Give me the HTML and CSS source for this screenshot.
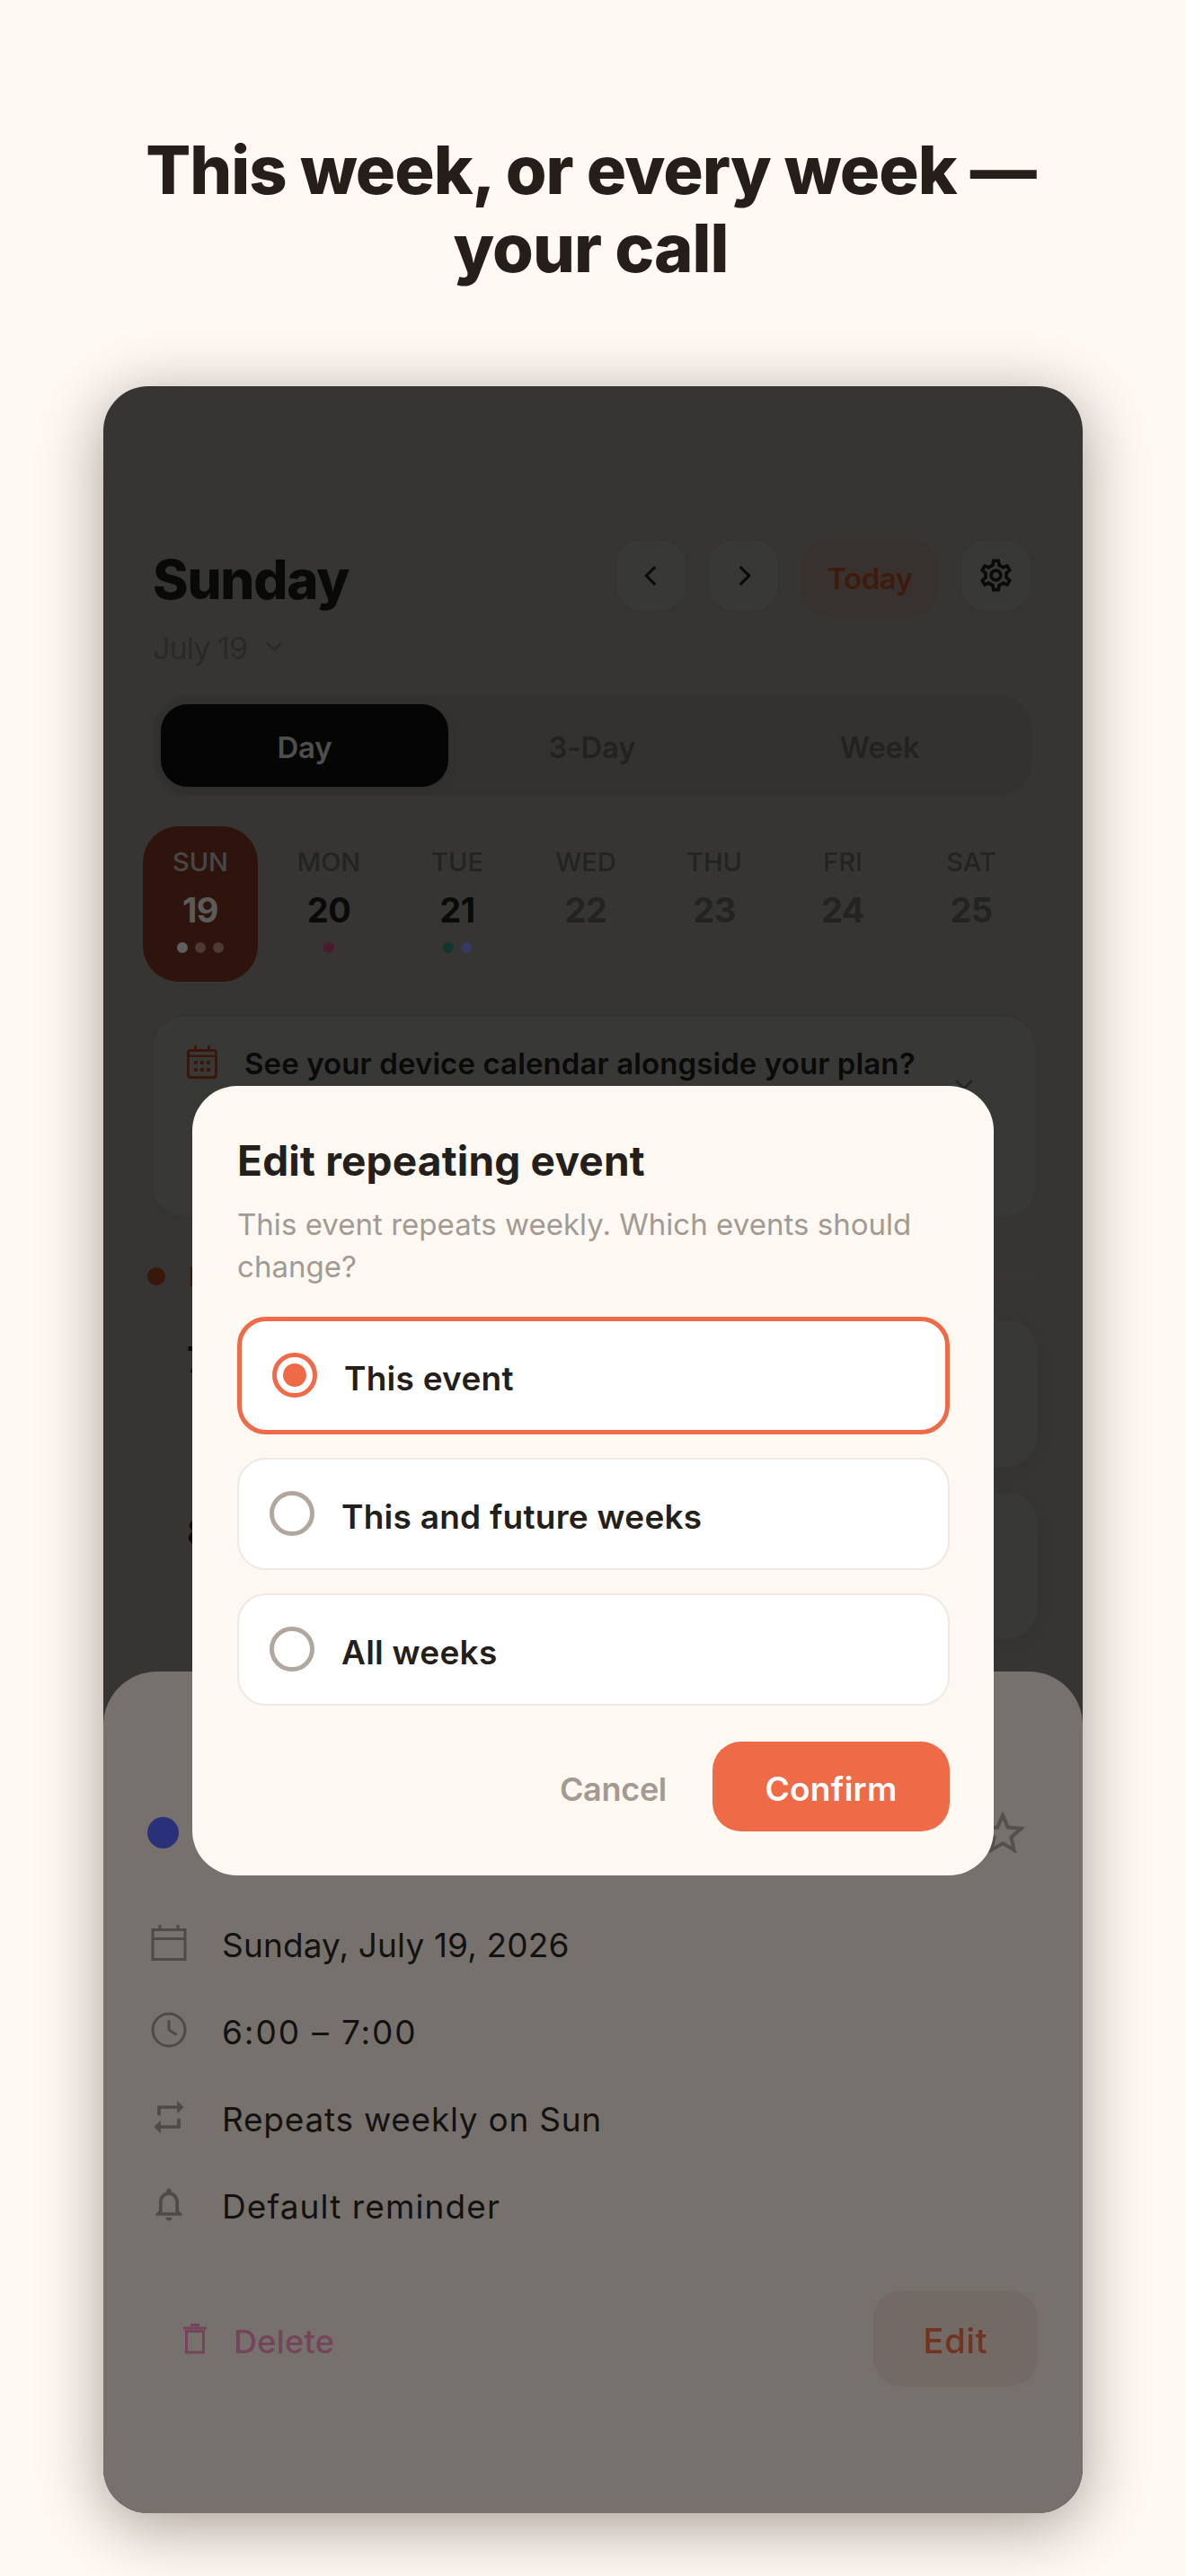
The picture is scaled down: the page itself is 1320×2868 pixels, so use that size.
FILE: index.html
```html
<!DOCTYPE html>
<html lang="en">
<head>
<meta charset="utf-8">
<title>This week, or every week</title>
<link rel="stylesheet" href="styles.css">
</head>
<body>
<h1 class="headline">This week, or every week —<br>your call</h1>
<main class="phone">
  <section class="screen">
    <header class="top">
      <div class="top-left">
        <h2 class="day-title">Sunday</h2>
        <div class="month"><span>July 19</span>
          <svg class="month-chev" viewBox="0 0 18 10"><path d="M1.5 1.5 9 8.5l7.500-7"/></svg>
        </div>
      </div>
      <div class="top-actions">
        <button class="square"><svg viewBox="0 0 24 24"><path d="M15 5l-7 7 7 7"/></svg></button>
        <button class="square"><svg viewBox="0 0 24 24"><path d="M9 5l7 7-7 7"/></svg></button>
        <button class="today">Today</button>
        <button class="square"><svg class="gear" viewBox="0 0 24 24"><path d="M19.43 12.98c.04-.32.07-.64.07-.98 0-.34-.03-.66-.07-.98l2.11-1.65c.19-.15.24-.42.12-.64l-2-3.46c-.09-.16-.26-.25-.44-.25-.06 0-.12.01-.17.03l-2.49 1c-.52-.4-1.08-.73-1.69-.98l-.38-2.65C14.46 2.18 14.25 2 14 2h-4c-.25 0-.46.18-.49.42l-.38 2.65c-.61.25-1.17.59-1.69.98l-2.49-1c-.06-.02-.12-.03-.18-.03-.17 0-.34.09-.43.25l-2 3.46c-.13.22-.07.49.12.64l2.11 1.65c-.04.32-.07.65-.07.98 0 .33.03.66.07.98l-2.11 1.65c-.19.15-.24.42-.12.64l2 3.46c.09.16.26.25.44.25.06 0 .12-.01.17-.03l2.49-1c.52.4 1.08.73 1.69.98l.38 2.65c.03.24.24.42.49.42h4c.25 0 .46-.18.49-.42l.38-2.65c.61-.25 1.17-.59 1.69-.98l2.49 1c.06.02.12.03.18.03.17 0 .34-.09.43-.25l2-3.46c.12-.22.07-.49-.12-.64l-2.11-1.65zm-1.98-1.71c.04.31.05.52.05.73 0 .21-.02.43-.05.73l-.14 1.13.89.7 1.08.84-.7 1.21-1.27-.51-1.04-.42-.9.68c-.43.32-.84.56-1.25.73l-1.06.43-.16 1.13-.2 1.35h-1.4l-.19-1.35-.16-1.13-1.06-.43c-.43-.18-.83-.41-1.23-.71l-.91-.7-1.06.43-1.27.51-.7-1.21 1.08-.84.89-.7-.14-1.13c-.03-.31-.05-.54-.05-.74s.02-.43.05-.73l.14-1.13-.89-.7-1.08-.84.7-1.21 1.27.51 1.04.42.9-.68c.43-.32.84-.56 1.25-.73l1.06-.43.16-1.13.2-1.35h1.39l.19 1.35.16 1.13 1.06.43c.43.18.83.41 1.23.71l.91.7 1.06-.43 1.27-.51.7 1.21-1.07.85-.89.7.14 1.13zM12 8c-2.21 0-4 1.79-4 4s1.79 4 4 4 4-1.79 4-4-1.79-4-4-4zm0 6c-1.1 0-2-.9-2-2s.9-2 2-2 2 .9 2 2-.9 2-2 2z"/></svg></button>
      </div>
    </header>

    <div class="segments">
      <div class="segment active">Day</div>
      <div class="segment">3-Day</div>
      <div class="segment">Week</div>
    </div>

    <div class="strip">
      <div class="date selected"><span class="dow">SUN</span><span class="num">19</span><span class="dots"><i class="d-a"></i><i class="d-b"></i><i class="d-b"></i></span></div>
      <div class="date soon"><span class="dow">MON</span><span class="num">20</span><span class="dots"><i class="d-c"></i></span></div>
      <div class="date soon"><span class="dow">TUE</span><span class="num">21</span><span class="dots"><i class="d-d"></i><i class="d-e"></i></span></div>
      <div class="date"><span class="dow">WED</span><span class="num">22</span></div>
      <div class="date"><span class="dow">THU</span><span class="num">23</span></div>
      <div class="date"><span class="dow">FRI</span><span class="num">24</span></div>
      <div class="date"><span class="dow">SAT</span><span class="num">25</span></div>
    </div>

    <div class="notice">
      <svg class="notice-icon" viewBox="0 0 34 37">
        <path class="fill" d="M8 0h3v4h12V0h3v4h4a4 4 0 0 1 4 4v25a4 4 0 0 1-4 4H4a4 4 0 0 1-4-4V8a4 4 0 0 1 4-4h4zM3 13v20a1 1 0 0 0 1 1h26a1 1 0 0 0 1-1V13zM3 7.500v3h28v-3a.5.5 0 0 0-.5-.5h-27a.5.5 0 0 0-.5.500z"/>
        <path class="fill" d="M8 17h4v4H8zM15 17h4v4h-4zM22 17h4v4h-4zM8 25h4v4H8zM15 25h4v4h-4zM22 25h4v4h-4z"/>
      </svg>
      <p class="notice-text">See your device calendar alongside your plan?</p>
      <svg class="notice-close" viewBox="0 0 22 22"><path d="M2 2l18 18M20 2 2 20"/></svg>
    </div>

    <div class="section">
      <span class="section-dot"></span>
      <span class="section-name">P</span>
      <span class="section-line"></span>
    </div>

    <div class="event"><span class="event-time">7</span><div class="event-card"></div></div>
    <div class="event"><span class="event-time">8</span><div class="event-card"></div></div>
  </section>

  <section class="sheet">
    <div class="sheet-head">
      <span class="sheet-dot"></span>
      <svg class="star" viewBox="0 0 48 46"><path d="M24 4l5.800 13.500 14.700 1.300-11.100 9.700 3.300 14.400L24 35.300l-12.700 7.600 3.300-14.400L3.500 18.800l14.700-1.300z"/></svg>
    </div>
    <div class="details">
      <div class="detail">
        <svg viewBox="0 0 44 44"><path d="M4 7.500h36v33H4zM4 17.500h36M12 2v5M32 2v5"/></svg>
        <span class="detail-date">Sunday, July 19, 2026</span>
      </div>
      <div class="detail">
        <svg viewBox="0 0 44 44"><circle cx="22" cy="22" r="18"/><path d="M22 11v11l8.500 5.500"/></svg>
        <span class="detail-time">6:00 – 7:00</span>
      </div>
      <div class="detail">
        <svg class="solid" viewBox="0 0 24 24"><path d="M7 7h10v3l4-4-4-4v3H5v6h2V7zm10 10H7v-3l-4 4 4 4v-3h12v-6h-2v4z"/></svg>
        <span class="detail-repeat">Repeats weekly on Sun</span>
      </div>
      <div class="detail">
        <svg class="solid" viewBox="0 0 24 24"><path d="M12 22c1.100 0 2-.9 2-2h-4c0 1.100.9 2 2 2zm6-6v-5c0-3.070-1.630-5.640-4.500-6.320V4c0-.83-.67-1.500-1.500-1.500s-1.500.67-1.500 1.500v.68C7.640 5.360 6 7.920 6 11v5l-2 2v1h16v-1l-2-2zm-2 1H8v-6c0-2.480 1.510-4.500 4-4.500s4 2.020 4 4.500v6z"/></svg>
        <span class="detail-remind">Default reminder</span>
      </div>
    </div>
    <div class="sheet-actions">
      <div class="delete">
        <svg viewBox="0 0 26 34"><path d="M3.500 8.500h19V32h-19zM0 5h26M8 1.500h10"/></svg>
        <span class="delete-label">Delete</span>
      </div>
      <button class="edit"><span class="edit-label">Edit</span></button>
    </div>
  </section>

  <section class="modal">
    <h3 class="modal-title">Edit repeating event</h3>
    <p class="modal-sub">This event repeats weekly. Which events should change?</p>
    <div class="options">
      <div class="option checked"><span class="radio"></span><span class="option-label">This event</span></div>
      <div class="option"><span class="radio"></span><span class="option-label">This and future weeks</span></div>
      <div class="option"><span class="radio"></span><span class="option-label">All weeks</span></div>
    </div>
    <div class="modal-actions">
      <button class="cancel">Cancel</button>
      <button class="confirm">Confirm</button>
    </div>
  </section>
</main>
</body>
</html>
```
FILE: styles.css
```css
* { box-sizing: border-box; }
html, body { margin: 0; padding: 0; }
body {
  width: 1320px;
  height: 2868px;
  overflow: hidden;
  background: #FFF8F3;
  font-family: "Inter", "Liberation Sans", sans-serif;
  padding-top: 146px;
}
button { font-family: inherit; border: 0; padding: 0; margin: 0; background: none; }
h1, h2, h3, p { margin: 0; }

.headline {
  padding-right: 5px;
  font-size: 74px;
  line-height: 87px;
  font-weight: 800;
  color: #241F1B;
  text-align: center;
  letter-spacing: -1px;
}

.phone {
  position: relative;
  width: 1090px;
  height: 2368px;
  margin: 110px 0 0 115px;
  border-radius: 50px;
  overflow: hidden;
  background: #373533;
  box-shadow: 0 14px 70px rgba(40, 30, 20, .42);
}

.screen { padding-top: 170px; }

.top {
  display: flex;
  justify-content: space-between;
  padding: 0 56px 0 55px;
}
.day-title {
  margin-top: 9px;
  font-size: 60px;
  line-height: 72px;
  font-weight: 800;
  letter-spacing: -1.2px;
  color: #090908;
}
.month {
  display: flex;
  align-items: center;
  gap: 21px;
  margin-top: 19px;
  font-size: 34px;
  line-height: 44px;
  color: #2A2927;
  letter-spacing: -.9px;
}
.month-chev { width: 18px; height: 10px; margin-top: -4px; }
.month-chev path { fill: none; stroke: #2A2927; stroke-width: 2.5; }

.top-actions { display: flex; align-items: flex-start; gap: 22px; }
.square {
  display: flex;
  align-items: center;
  justify-content: center;
  width: 81px;
  height: 81px;
  border-radius: 28px;
  background: #383837;
  border: 2px solid #353433;
}
.square svg { width: 34px; height: 34px; }
.square svg path { fill: none; stroke: #0A0A09; stroke-width: 2.2; }
.square svg.gear { width: 43px; height: 43px; }
.square svg.gear path { fill: #0A0A09; stroke: none; }
.today {
  width: 156px;
  height: 87px;
  border-radius: 34px;
  background: #38322F;
  color: #3F1B0F;
  font-size: 33px;
  font-weight: 600;
  letter-spacing: -.5px;
}

.segments {
  display: grid;
  grid-template-columns: repeat(3, 320px);
  width: 978px;
  height: 112px;
  margin: 30px 0 0 56px;
  padding: 10px 8px;
  border-radius: 38px;
  background: #333230;
}
.segment {
  display: flex;
  align-items: center;
  justify-content: center;
  padding-top: 3px;
  border-radius: 30px;
  font-size: 33px;
  font-weight: 600;
  letter-spacing: -.2px;
  color: #232220;
}
.segment.active {
  background: #050505;
  color: #4F4E4C;
  box-shadow: 0 4px 12px rgba(0,0,0,.1);
}

.strip {
  display: grid;
  grid-template-columns: repeat(7, 143px);
  margin: 34px 0 0 36.5px;
}
.date {
  display: flex;
  flex-direction: column;
  align-items: center;
  width: 128px;
  height: 173px;
  margin: 0 auto;
  padding-top: 22px;
  border-radius: 40px;
  color: #232322;
}
.dow { font-size: 29px; line-height: 36px; font-weight: 500; }
.num { font-size: 38px; line-height: 46px; margin-top: 12px; font-weight: 700; letter-spacing: -.5px; }
.dots { display: flex; gap: 8px; margin-top: 13px; }
.dots i { display: block; width: 12px; height: 12px; border-radius: 50%; }
.date.selected { background: #2E140D; color: #474747; }
.date.selected .num { color: #5B5B5B; }
.date.soon .num { color: #0A0A09; }
.d-a { background: #5F5F5F; }
.d-b { background: #4E3A35; }
.d-c { background: #4A1A2E; }
.d-d { background: #103630; }
.d-e { background: #363A60; }

.notice {
  position: relative;
  display: flex;
  align-items: flex-start;
  gap: 30px;
  width: 986px;
  height: 227px;
  margin: 37px 0 0 53px;
  padding: 30px 38px;
  border-radius: 36px;
  background: #383837;
  border: 2px solid #353433;
}
.notice-icon { flex: none; width: 34px; height: 37px; margin-top: 2px; }
.fill { fill: #3A170B; fill-rule: evenodd; }
.notice-text {
  font-size: 33px;
  line-height: 44px;
  font-weight: 600;
  letter-spacing: .1px;
  color: #0A0A09;
  white-space: nowrap;
}
.notice-close { position: absolute; top: 69px; right: 68px; width: 22px; height: 22px; }
.notice-close path { fill: none; stroke: #262524; stroke-width: 2.5; }

.section {
  display: flex;
  align-items: center;
  height: 32px;
  margin: 48px 0 0 49px;
  width: 990px;
  color: #3A170B;
}
.section-dot { width: 20px; height: 20px; border-radius: 50%; background: #3A170B; }
.section-name { margin-left: 26px; font-size: 29px; font-weight: 700; }
.section-line { flex: 1; height: 2px; margin-left: 20px; background: #3C3431; }

.event {
  display: flex;
  gap: 70px;
  height: 163px;
  margin: 33px 0 0 93px;
  width: 947px;
}
.event + .event { margin-top: 29px; }
.event-time { font-size: 40px; line-height: 48px; font-weight: 700; color: #0A0A09; margin-top: 20px; }
.event-card {
  flex: 1;
  border-radius: 34px;
  background: #383837;
  box-shadow: 0 4px 24px rgba(0,0,0,.05);
}

.sheet {
  position: absolute;
  left: 0;
  right: 0;
  bottom: 0;
  height: 937px;
  padding-top: 156px;
  border-radius: 60px 60px 0 0;
  background: #76716D;
}
.sheet-head {
  display: flex;
  align-items: center;
  justify-content: space-between;
  height: 46px;
  padding: 0 65px 0 49px;
}
.sheet-dot { width: 35px; height: 35px; border-radius: 50%; background: #2B3178; }
.star { width: 48px; height: 46px; }
.star path { fill: none; stroke: #55504C; stroke-width: 4; stroke-linejoin: miter; }
.details { margin-top: 51px; padding-left: 51px; }
.detail {
  display: flex;
  align-items: center;
  gap: 37px;
  height: 97px;
  font-size: 37px;
  color: #131211;
}
.detail span { padding-top: 5px; }
.detail-date { letter-spacing: .15px; }
.detail-time { letter-spacing: 1.9px; }
.detail-repeat { letter-spacing: .75px; }
.detail-remind { letter-spacing: 1.1px; }
.detail svg { flex: none; width: 44px; height: 44px; }
.detail svg path, .detail svg circle { fill: none; stroke: #4F4A46; stroke-width: 3; }
.detail svg.solid path { fill: #4F4A46; stroke: none; }
.sheet-actions {
  display: flex;
  align-items: center;
  justify-content: space-between;
  margin-top: 48px;
  padding: 0 50px 0 89px;
}
.delete {
  display: flex;
  align-items: center;
  gap: 30px;
  color: #74455A;
}
.delete-label { font-size: 36px; font-weight: 500; letter-spacing: .3px; padding-top: 6px; }
.delete svg { width: 26px; height: 34px; }
.delete svg path { fill: none; stroke: #74455A; stroke-width: 3; }
.edit {
  width: 183px;
  height: 107px;
  border-radius: 32px;
  background: #746A65;
  color: #703420;
}
.edit-label { display: block; padding-top: 5px; font-size: 38px; font-weight: 500; letter-spacing: .8px; }

.modal {
  position: absolute;
  top: 779px;
  left: 99px;
  width: 892px;
  height: 879px;
  padding: 55px 49px 49px 50px;
  border-radius: 50px;
  background: #FDF8F2;
}
.modal-title {
  font-size: 46px;
  line-height: 56px;
  font-weight: 700;
  letter-spacing: .2px;
  color: #241F1B;
}
.modal-sub {
  margin-top: 20px;
  font-size: 33px;
  line-height: 47px;
  color: #A39A92;
  letter-spacing: .03px;
}
.options { display: flex; flex-direction: column; gap: 26px; margin-top: 32px; }
.option {
  display: flex;
  align-items: center;
  gap: 30px;
  height: 125px;
  padding-left: 34px;
  border: 2px solid #F0E8E2;
  border-radius: 32px;
  background: #FFFFFF;
}
.option.checked {
  height: 131px;
  padding-left: 34px;
  border: 5px solid #EF6A46;
}
.radio {
  position: relative;
  flex: none;
  width: 50px;
  height: 50px;
  margin-top: -2px;
  border: 5px solid #B0A89F;
  border-radius: 50%;
}
.option.checked .radio { border-color: #EF6A46; }
.option.checked .radio::after {
  content: "";
  position: absolute;
  top: 7px;
  left: 7px;
  width: 26px;
  height: 26px;
  border-radius: 50%;
  background: #EF6A46;
}
.option-label {
  margin-top: 6px;
  font-size: 37px;
  font-weight: 600;
  letter-spacing: .25px;
  color: #241F1B;
}
.modal-actions {
  display: flex;
  justify-content: flex-end;
  align-items: center;
  gap: 51px;
  margin-top: 40px;
}
.cancel {
  padding-top: 5px;
  font-size: 36px;
  font-weight: 600;
  color: #A39A92;
  letter-spacing: -.3px;
}
.confirm {
  width: 264px;
  height: 100px;
  padding-top: 5px;
  border-radius: 32px;
  background: #EF6A46;
  color: #FFFFFF;
  font-size: 37px;
  font-weight: 600;
  letter-spacing: .3px;
}
```
